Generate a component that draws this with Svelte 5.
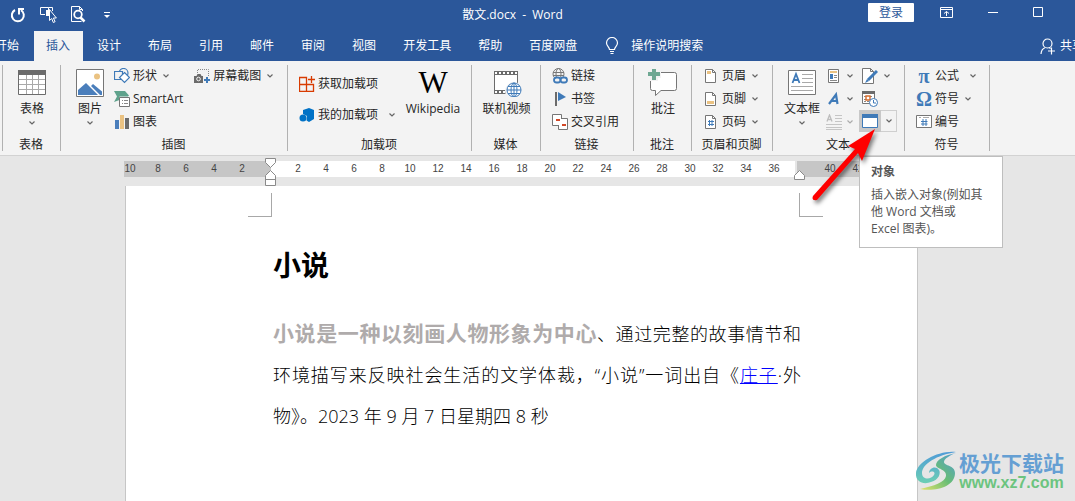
<script>
  const tabs = ['开始', '插入', '设计', '布局', '引用', '邮件', '审阅', '视图', '开发工具', '帮助', '百度网盘']
  let activeTab = $state('插入')

  const leftMarks = [10, 8, 6, 4, 2]
  const mainMarks = Array.from({ length: 18 }, (_, i) => (i + 1) * 2)
  const rightMarks = [40, 42, 44]
</script>

{#snippet chevron()}
  <svg class="chevron" width="6" height="4" viewBox="0 0 6 4"><path d="M.5 .5 3 3 5.500 .5" fill="none" stroke="#666" stroke-width="1.200" /></svg>
{/snippet}

{#snippet pageIcon(kind)}
  <svg width="16" height="16" viewBox="0 0 16 16">
    <path d="M2.500 1.500h7l3 3v10h-10z" fill="#fff" stroke="#767676" />
    <path d="M9.500 1.500v3h3" fill="none" stroke="#767676" />
    {#if kind === 'header'}
      <rect x="4" y="3" width="4" height="3" fill="#eac282" />
    {:else if kind === 'footer'}
      <rect x="4" y="10" width="7" height="3" fill="#eac282" />
    {:else}
      <path d="M6.500 6v6M9 6v6M5 7.500h6M5 10.500h6" stroke="#3f7ab8" />
    {/if}
  </svg>
{/snippet}

<div class="window">
  <header>
    <div class="titlebar">
      <div class="quick-access">
        <button aria-label="重复">
          <svg width="16" height="16" viewBox="0 0 16 16"><path d="M5 3A6 6 0 1 0 11 3.200" fill="none" stroke="#fff" stroke-width="2" /><path d="M9 7.500V2h5" fill="none" stroke="#fff" stroke-width="2" /></svg>
        </button>
        <button aria-label="选择对象">
          <svg width="17" height="17" viewBox="0 0 17 17"><path d="M5 8.500H.5v-7h8V4M8.500 1.500h4V5" fill="none" stroke="#fff" /><path d="M6 4h3v6H6z" fill="#fff" /><path d="M9.500 3.500v11l2.200-2 1.600 4 1.800-.8-1.700-3.700h3z" fill="#2b579a" stroke="#fff" /></svg>
        </button>
        <button aria-label="打印预览">
          <svg width="15" height="17" viewBox="0 0 15 17"><path d="M11.500 5V3.500l-3-3H.5v15h10M8.500 .5v3h3" fill="none" stroke="#fff" /><circle cx="7" cy="8.500" r="3.800" fill="none" stroke="#fff" stroke-width="1.800" /><path d="m9.500 11.500 4 4" stroke="#fff" stroke-width="2.500" /></svg>
        </button>
        <button aria-label="自定义快速访问工具栏">
          <svg width="6" height="8" viewBox="0 0 6 8"><path d="M0 1.500h6" stroke="#fff" /><path d="M0 4h6L3 7z" fill="#fff" /></svg>
        </button>
      </div>
      <div class="title">散文.docx &nbsp;-&nbsp; Word</div>
      <button class="sign-in">登录</button>
      <div class="window-controls">
        <button aria-label="功能区显示选项">
          <svg width="13" height="11" viewBox="0 0 13 11"><path d="M.5 .5h12v10H.5zM0 2.500h13M6.500 9V4.500M4 6.500l2.500-2 2.500 2" fill="none" stroke="#fff" /></svg>
        </button>
        <button aria-label="最小化">
          <svg width="10" height="11" viewBox="0 0 10 11"><path d="M0 5.500h10" stroke="#fff" /></svg>
        </button>
        <button aria-label="最大化">
          <svg width="10" height="11" viewBox="0 0 10 11"><path d="M.5 .5h9v9h-9z" fill="none" stroke="#fff" /></svg>
        </button>
      </div>
    </div>

    <nav class="tabs">
      {#each tabs as tab}
        <button class="tab" class:active={tab === activeTab} onclick={() => (activeTab = tab)}>{tab}</button>
      {/each}
      <button class="tell-me">
        <svg width="14" height="18" viewBox="0 0 14 18"><path d="M4.500 12.500c0-2.500-3-3.500-3-6.500a5.500 5.500 0 0 1 11 0c0 3-3 4-3 6.500zM5 14.500h4M5.500 16.500h3" fill="none" stroke="#fff" stroke-width="1.200" /></svg>
        <span>操作说明搜索</span>
      </button>
      <button class="share">
        <svg width="16" height="17" viewBox="0 0 16 17"><circle cx="7.500" cy="5.500" r="4.500" fill="none" stroke="#fff" stroke-width="1.200" /><path d="M1 16c.3-3.500 2-5.500 4-6.200M9 9.500l1.500 1M11.500 9.500v7M8 13h7" fill="none" stroke="#fff" stroke-width="1.200" /></svg>
        <span>共享</span>
      </button>
    </nav>
  </header>

  <div class="ribbon">
    <section class="group">
      <div class="tools">
        <button class="large">
          <svg width="28" height="28" viewBox="0 0 28 28"><path d="M.5 1.500h27v24H.5z" fill="#fff" stroke="#6b6b6b" /><path d="M0 1h28v5H0z" fill="#6b6b6b" /><path d="M1 10.500h26M1 15.500h26M1 20.500h26M8.500 6v19M14.500 6v19M20.500 6v19" stroke="#a9a9a9" /></svg>
          <span>表格</span>{@render chevron()}
        </button>
      </div>
      <h2>表格</h2>
    </section>

    <section class="group illustrations">
      <div class="tools">
        <button class="large">
          <svg width="28" height="28" viewBox="0 0 28 28"><path d="M.5 .5h27v27H.5z" fill="#fff" stroke="#767676" /><circle cx="21" cy="7.500" r="3" fill="#eac282" /><path d="M2 26v-5l8-7 12 12z" fill="#4a7ebb" /><path d="m15 17 2-2 9 7.500V26h-2z" fill="#4a7ebb" /></svg>
          <span>图片</span>{@render chevron()}
        </button>
        <div class="stack">
          <button class="small">
            <svg width="16" height="16" viewBox="0 0 16 16"><circle cx="9.500" cy="5" r="4.500" fill="none" stroke="#3f7ab8" stroke-width="1.200" /><path d="M.5 3.500h8v8h-8z" fill="#f3f3f3" stroke="#3f7ab8" stroke-width="1.200" /><path d="m10.500 4.500 5 5-5 5-5-5z" fill="#fff" stroke="#3f7ab8" stroke-width="1.200" /></svg>
            <span>形状</span>{@render chevron()}
          </button>
          <button class="small">
            <svg width="16" height="16" viewBox="0 0 16 16"><path d="M0 0h11l4 4.500-1 1H5.500V9L0 11l3-5.500z" fill="#5fa28c" /><path d="M5.500 6.500h10v9h-10z" fill="#fff" stroke="#767676" /><path d="M8 9.500h1M8 12.500h1M10 9.500h4M10 12.500h4" stroke="#888" /></svg>
            <span>SmartArt</span>
          </button>
          <button class="small">
            <svg width="16" height="16" viewBox="0 0 16 16"><path d="M1 6h4v9H1z" fill="#4a7ebb" /><path d="M6 1h4v14H6z" fill="#eac282" /><path d="M11 4h4v11h-4z" fill="#6b6b6b" /></svg>
            <span>图表</span>
          </button>
        </div>
        <div class="stack">
          <button class="small">
            <svg width="16" height="16" viewBox="0 0 16 16"><path d="M3.500 5V1.500h11V9" fill="none" stroke="#888" stroke-dasharray="1 1" /><path d="M0 8h2.500l1-2h3l1 2H9v7H0z" fill="#6b6b6b" /><circle cx="4.500" cy="11" r="1.800" fill="none" stroke="#f3f3f3" /><path d="M13 9v6M10 12h6" stroke="#3f7ab8" stroke-width="2" /></svg>
            <span>屏幕截图</span>{@render chevron()}
          </button>
        </div>
      </div>
      <h2>插图</h2>
    </section>

    <section class="group addins">
      <div class="tools">
        <div class="stack wide-rows">
          <button class="small">
            <svg width="16" height="16" viewBox="0 0 16 16"><path d="M7.500 15.500v-14h-7v14h14v-7H.5M12.500 0v7M9 3.500h7" fill="none" stroke="#d83b01" stroke-width="1.300" /></svg>
            <span>获取加载项</span>
          </button>
          <button class="small">
            <svg width="16" height="16" viewBox="0 0 16 16"><path d="m4 3 6-2 5 2v9l-5 3-2.500-1.500L8 9 4 7z" fill="#0072c6" /><circle cx="4" cy="11" r="3.500" fill="#0072c6" /></svg>
            <span>我的加载项</span>{@render chevron()}
          </button>
        </div>
        <button class="large">
          <span class="wiki" aria-hidden="true">W</span>
          <span>Wikipedia</span>
        </button>
      </div>
      <h2>加载项</h2>
    </section>

    <section class="group">
      <div class="tools">
        <button class="large">
          <svg width="30" height="28" viewBox="0 0 30 28"><path d="M2 2h24v23H2z" fill="#6b6b6b" /><path d="M3 6h22v15H3z" fill="#fff" /><path d="M3 4h22M3 23h22" stroke="#fff" stroke-width="2" stroke-dasharray="2 2" /><circle cx="22" cy="22" r="9" fill="#f3f3f3" /><g fill="none" stroke="#3f7ab8"><circle cx="22" cy="21" r="7" fill="#fff" /><ellipse cx="22" cy="21" rx="3" ry="7" /><path d="M15 21h14M16 17.500h12M16 24.500h12M22 14v14" /></g></svg>
          <span>联机视频</span>
        </button>
      </div>
      <h2>媒体</h2>
    </section>

    <section class="group links">
      <div class="tools">
        <div class="stack">
          <button class="small">
            <svg width="16" height="16" viewBox="0 0 16 16"><g fill="none" stroke="#777"><circle cx="6.500" cy="6" r="5.500" /><ellipse cx="6.500" cy="6" rx="2.500" ry="5.500" /><path d="M1 4.500h11M1 7.500h11" /></g><path d="M0 9h16v7H0z" fill="#f3f3f3" /><rect x="2" y="9.500" width="6.500" height="5" rx="2.500" fill="none" stroke="#3f7ab8" stroke-width="1.800" /><rect x="8.500" y="9.500" width="6.500" height="5" rx="2.500" fill="none" stroke="#3f7ab8" stroke-width="1.800" /></svg>
            <span>链接</span>
          </button>
          <button class="small">
            <svg width="16" height="16" viewBox="0 0 16 16"><path d="M4 1v14" stroke="#6b6b6b" stroke-width="2" /><path d="m6 1 8 5-8 4z" fill="#3f7ab8" /></svg>
            <span>书签</span>
          </button>
          <button class="small">
            <svg width="16" height="16" viewBox="0 0 16 16"><path d="M.5 .5h9v11h-9z" fill="#fff" stroke="#767676" /><path d="M6.500 4.500h9v11h-9z" fill="#fff" stroke="#767676" /><path d="M6 4h3v7H6z" fill="#fff" /><path d="M4 6h4M10 11h4" stroke="#d24726" stroke-width="2" /></svg>
            <span>交叉引用</span>
          </button>
        </div>
      </div>
      <h2>链接</h2>
    </section>

    <section class="group">
      <div class="tools">
        <button class="large">
          <svg width="30" height="28" viewBox="0 0 30 28"><path d="M4.500 3.500h22a2 2 0 0 1 2 2v14a2 2 0 0 1-2 2H13l-5.500 5v-5h-3a2 2 0 0 1-2-2v-14a2 2 0 0 1 2-2z" fill="#fff" stroke="#767676" /><path d="M-1-1h11v4h3v6h-3v3H2V9h-3z" fill="#f3f3f3" /><path d="M4-1h4v4h4v4H8v4H4V7H0V3h4z" fill="#6fa893" /></svg>
          <span>批注</span>
        </button>
      </div>
      <h2>批注</h2>
    </section>

    <section class="group header-footer">
      <div class="tools">
        <div class="stack">
          <button class="small">{@render pageIcon('header')}<span>页眉</span>{@render chevron()}</button>
          <button class="small">{@render pageIcon('footer')}<span>页脚</span>{@render chevron()}</button>
          <button class="small">{@render pageIcon('number')}<span>页码</span>{@render chevron()}</button>
        </div>
      </div>
      <h2>页眉和页脚</h2>
    </section>

    <section class="group text">
      <div class="tools">
        <button class="large">
          <svg width="28" height="28" viewBox="0 0 28 28"><path d="M.5 1.500h27v24H.5z" fill="#fff" stroke="#767676" /><path d="m4.500 14 3.500-9 3.500 9M5.500 11h5" fill="none" stroke="#3f7ab8" stroke-width="1.800" /><path d="M14 5.500h11M14 9.500h11M14 13.500h11M3 17.500h22M3 21.500h22" stroke="#a9a9a9" /></svg>
          <span>文本框</span>{@render chevron()}
        </button>
        <div class="stack">
          <button class="icon-only" aria-label="文档部件">
            <svg width="16" height="16" viewBox="0 0 16 16"><path d="M2.500 1.500h10v13h-10z" fill="#fff" stroke="#767676" /><path d="M4 4h7" stroke="#eac282" stroke-width="2" /><path d="M4 6h3v5H4z" fill="#3f7ab8" /><path d="M8 7.500h3M8 9.500h3M4 12.500h7" stroke="#888" /></svg>
            {@render chevron()}
          </button>
          <button class="icon-only" aria-label="艺术字">
            <svg width="16" height="16" viewBox="0 0 16 16"><path d="m3 13 7-9.500 1.500 9.500M5.500 10h5.500" fill="none" stroke="#3f7ab8" stroke-width="2.200" /></svg>
            {@render chevron()}
          </button>
          <button class="icon-only disabled" aria-label="首字下沉" disabled>
            <svg width="16" height="16" viewBox="0 0 16 16"><path d="m1 7.500 2.500-6.500 2.500 6.500M2 5.500h3" fill="none" stroke="#888" stroke-width="1.300" /><path d="M9 1.500h7M9 4.500h7M9 7.500h7M0 10.500h16M0 13.500h16M0 15.500h16" stroke="#999" /></svg>
            {@render chevron()}
          </button>
        </div>
        <div class="stack objects">
          <button class="icon-only" aria-label="签名行">
            <svg width="16" height="16" viewBox="0 0 16 16"><path d="M.5 .5h8l3 3v12H.5zM8.500 .5v3h3" fill="#fff" stroke="#767676" /><path d="m6 12 9-9" stroke="#3f7ab8" stroke-width="3" /><path d="m3 15 2-4 2 2z" fill="#3f7ab8" /></svg>
            {@render chevron()}
          </button>
          <button class="icon-only" aria-label="日期和时间">
            <svg width="16" height="16" viewBox="0 0 16 16"><path d="M.5 .5h12v12H.5z" fill="#fff" stroke="#767676" /><path d="M0 0h13v3H0z" fill="#6b6b6b" /><path d="M2 5.500h9M2 8.500h9M2 10.500h9" stroke="#888" stroke-dasharray="2 1" /><path d="M4 5h4v4H4z" fill="#fff" stroke="#d86b2a" stroke-width="1.400" /><circle cx="11.500" cy="11.500" r="4" fill="#fff" stroke="#3f7ab8" /><path d="M11.500 9v3h2.500" fill="none" stroke="#3f7ab8" /></svg>
          </button>
          <div class="object-split">
            <button class="object-main" aria-label="对象" aria-describedby="object-tip">
              <svg width="16" height="14" viewBox="0 0 16 14"><path d="M.5 .5h15v13H.5z" fill="#fff" stroke="#3f7ab8" /><path d="M0 0h16v4H0z" fill="#3f7ab8" /></svg>
            </button>
            <button class="object-more" aria-label="更多对象选项">{@render chevron()}</button>
            <div class="tooltip" id="object-tip" role="tooltip">
              <strong>对象</strong>
              <p>插入嵌入对象(例如其他 Word 文档或 Excel 图表)。</p>
            </div>
            <svg class="pointer" width="80" height="84" viewBox="0 0 80 84">
              <path d="M70 3 43 20l7 3L8 70q-2 5 4 4L53 27l4 8z" fill="#fe0000" />
            </svg>
          </div>
        </div>
      </div>
      <h2>文本</h2>
    </section>

    <section class="group symbols">
      <div class="tools">
        <div class="stack">
          <button class="small formula"><span class="glyph" aria-hidden="true">π</span><span>公式</span>{@render chevron()}</button>
          <button class="small"><span class="glyph" aria-hidden="true">Ω</span><span>符号</span>{@render chevron()}</button>
          <button class="small">
            <svg width="16" height="16" viewBox="0 0 16 16"><path d="M.5 1.500h15v12H.5z" fill="#fff" stroke="#767676" /><path d="M3 3.500h2M7 3.500h6" stroke="#aaa" /><path d="M7 5v7M10 5v7M5 7.500h6.500M5 10h6.500" stroke="#3f7ab8" /></svg>
            <span>编号</span>
          </button>
        </div>
      </div>
      <h2>符号</h2>
    </section>
  </div>

  <main>
    <div class="ruler">
      <div class="ruler-part before">{#each leftMarks as n}<span>{n}</span>{/each}</div>
      <div class="ruler-part inside">{#each mainMarks as n}<span>{n}</span>{/each}</div>
      <div class="ruler-part after">{#each rightMarks as n}<span>{n}</span>{/each}</div>
      <svg class="indent first" width="12" height="29" viewBox="0 0 12 29"><path d="M.5 .5h10v4l-5 5-5-5zM5.500 12.500l5 5v10H.5v-10zM.5 21.500h10" fill="#fff" stroke="#8a8a8a" /></svg>
      <svg class="indent last" width="12" height="12" viewBox="0 0 12 12"><path d="m5.500 .5 5 5v4H.5v-4z" fill="#fff" stroke="#8a8a8a" /></svg>
    </div>

    <article class="page">
      <div class="margins"><i class="corner left"></i><i class="corner right"></i></div>
      <h1>小说</h1>
      <p class="body-text" lang="zh-CN"><b>小说是一种以刻画人物形象为中心</b>、通过完整的故事情节和环境描写来反映社会生活的文学体裁&#xFF0C;“小说”一词出自《<a href="#zhuangzi">庄子</a>·外物》。2023 年 9 月 7 日星期四 8 秒</p>
    </article>
  </main>

  <div class="watermark">
    <svg width="44" height="42" viewBox="0 0 44 42">
      <defs>
        <linearGradient id="wave" x1="0" y1="0" x2="0" y2="1"><stop offset="0" stop-color="#4f9bd8" /><stop offset="1" stop-color="#6ccfb4" /></linearGradient>
        <linearGradient id="leaf" x1="1" y1="0" x2="0" y2="1"><stop offset="0" stop-color="#4f9bd8" /><stop offset=".5" stop-color="#68bd75" /><stop offset="1" stop-color="#e5e36a" /></linearGradient>
      </defs>
      <path d="M41 2C24 0 2 12 1 23c-1 9 8 12 15 9 8-2 10-9 8-12-3-5-10-2-10 3 3-3 7-1 5 2-3 5-12 5-12-2C7 14 22 5 41 2z" fill="url(#wave)" />
      <path d="M41 3C30 5 21 10 21 15c0 4 11 4 10 11-1 6-12 10-26 13 15 3 35-2 35-16 0-8-11-7-11-11 0-3 6-7 12-9z" fill="url(#leaf)" />
    </svg>
    <div>
      <div class="site-name">极光下载站</div>
      <div class="site-url">www.xz7.com</div>
    </div>
  </div>
</div>

<style>
  :global(body) {
    background: #e6e6e6;
  }

  .window {
    position: relative;
    display: flex;
    flex-direction: column;
    min-height: 100vh;
    overflow: hidden;
    font: 12px/16px 'Open Sans', 'Noto Sans CJK SC', sans-serif;
    color: #262626;
  }

  button {
    display: flex;
    align-items: center;
    padding: 0;
    border: 0;
    background: none;
    font: inherit;
    color: inherit;
    white-space: nowrap;
  }

  svg {
    display: block;
    flex: none;
  }

  h1, h2, p {
    margin: 0;
  }

  /* Title bar and tabs */
  header {
    background: #2b579a;
    color: #fff;
  }

  .titlebar {
    display: flex;
    align-items: center;
    height: 29px;
    padding-bottom: 2px;
  }

  .quick-access {
    display: flex;
    align-items: center;
    gap: 14px;
    width: 147px;
    height: 28px;
    padding-left: 10px;
  }

  .quick-access button:last-child {
    margin-left: 4px;
  }

  .title {
    flex: 1;
    text-align: center;
  }

  .sign-in {
    justify-content: center;
    width: 46px;
    height: 19px;
    margin-bottom: 4px;
    border-radius: 1px;
    background: #fff;
    color: #2b579a;
  }

  .window-controls {
    display: flex;
    gap: 35px;
    padding: 0 32px 4px 26px;
  }

  .tabs {
    display: flex;
    height: 30px;
    margin-left: -17px;
  }

  .tab {
    padding: 0 13px 0 12px;
    margin-right: 2px;
  }

  .tab.active {
    background: #f3f3f3;
    color: #2b579a;
  }

  .tell-me {
    gap: 12px;
    margin-left: 13px;
  }

  .share {
    gap: 4px;
    margin: 0 -9px 0 auto;
  }

  /* Ribbon */
  .ribbon {
    display: grid;
    grid-template-columns: 58px 227px 184px 69px 93px 58px 81px 132px 85px;
    padding-left: 2px;
    border-bottom: 1px solid #d2d2d2;
    background: #f3f3f3;
  }

  .group {
    position: relative;
    display: flex;
    flex-direction: column;
  }

  .group::before,
  .group:last-child::after {
    content: '';
    position: absolute;
    top: 4px;
    bottom: 4px;
    left: 0;
    width: 1px;
    background: #b1b1b1;
  }

  .group:last-child::after {
    left: 100%;
  }

  .tools {
    display: flex;
    height: 69px;
    padding-top: 3px;
  }

  h2 {
    padding-top: 2px;
    font: inherit;
    line-height: 20px;
    text-align: center;
  }

  .large {
    flex-direction: column;
    flex: 1;
    padding: 5px 0 0 2px;
  }

  .large span {
    margin-top: 4px;
  }

  .large .chevron {
    margin-top: 4px;
  }

  .large .wiki {
    height: 28px;
    margin: 0;
    font: 31px/28px 'Liberation Serif', serif;
    color: #000;
  }

  .small {
    gap: 3px;
    height: 23px;
  }

  .chevron {
    margin-left: 3px;
  }

  .large .chevron,
  .object-more .chevron {
    margin-left: 0;
  }

  .illustrations .stack:last-child {
    margin: 0 14px 0 11px;
  }

  .illustrations .large,
  .text .large {
    flex: none;
    width: 54px;
    padding-left: 6px;
  }

  .wide-rows {
    padding: 4px 0 0 12px;
  }

  .wide-rows .small {
    height: 31px;
  }

  .wide-rows .chevron {
    margin-left: 8px;
  }

  .addins .large {
    padding-left: 0;
  }

  .links .tools {
    padding-left: 12px;
  }

  .header-footer .tools {
    padding-left: 12px;
  }

  .icon-only {
    height: 23px;
    gap: 2px;
    width: 33px;
  }

  .disabled {
    opacity: 0.5;
  }

  .objects .icon-only {
    padding-left: 3px;
    gap: 3px;
  }

  .object-split {
    position: relative;
    display: flex;
    width: 38px;
    height: 22px;
  }

  .object-main {
    justify-content: center;
    width: 22px;
    background: #c8c8c8;
  }

  .object-more {
    flex: 1;
    justify-content: center;
    border: 1px solid #cfcfcf;
    border-left: 0;
  }

  .symbols .tools {
    padding-left: 12px;
  }

  .formula .chevron {
    margin-left: 8px;
  }

  .glyph {
    width: 16px;
    text-align: center;
    font: bold 20px/20px 'Liberation Serif', serif;
    color: #3f7ab8;
  }

  .tooltip {
    position: absolute;
    z-index: 2;
    top: 46px;
    left: 0;
    box-sizing: border-box;
    width: 144px;
    padding: 6px 18px 10px 11px;
    border: 1px solid #bebebe;
    background: #fff;
    color: #555;
    line-height: 17px;
  }

  .tooltip p {
    margin-top: 6px;
  }

  .pointer {
    position: absolute;
    z-index: 3;
    top: 16px;
    left: -54px;
    filter: drop-shadow(2px 3px 2px rgba(0, 0, 0, 0.5));
    pointer-events: none;
  }

  /* Document area */
  main {
    display: flex;
    flex-direction: column;
    flex: 1;
    padding-left: 124px;
    background: #e6e6e6;
  }

  .ruler {
    position: relative;
    display: flex;
    max-width: 792px;
    margin: 5px 0 9px;
    font: 10px/16px 'Liberation Sans', sans-serif;
    color: #444;
  }

  .ruler-part {
    display: flex;
    height: 16px;
  }

  .ruler-part span {
    flex: none;
    width: 28px;
    text-align: center;
  }

  .before {
    justify-content: flex-end;
    width: 132px;
    padding-right: 15px;
    background: #c6c6c6;
  }

  .inside {
    width: 511px;
    padding-left: 13px;
    background: #fff;
  }

  .after {
    flex: 1;
    margin-left: 2px;
    padding-left: 19px;
    background: #c6c6c6;
  }

  .indent {
    position: absolute;
    top: -3px;
    left: 141px;
  }

  .indent.last {
    top: 9px;
    left: 670px;
  }

  .page {
    flex: 1;
    max-width: 791px;
    margin-left: 1px;
    border: solid #c6c6c6;
    border-width: 0 1px;
    background: #fff;
    color: #000;
  }

  .margins {
    display: flex;
    justify-content: space-between;
    padding: 7px 94px 0 122px;
  }

  .corner {
    width: 23px;
    height: 23px;
    border: solid #a8a8a8;
    border-width: 0 1px 1px 0;
  }

  .corner.right {
    border-width: 0 0 1px 1px;
  }

  h1 {
    margin: 27px 0 0 147px;
    font: bold 28px/40px 'Noto Sans CJK SC', sans-serif;
  }

  .body-text {
    padding: 29px 116px 0 147px;
    font: 300 18px/41px 'Open Sans', 'Noto Sans CJK SC', sans-serif;
    text-align: justify;
  }

  .body-text b {
    font-size: 21px;
    font-weight: 700;
    color: #afabab;
  }

  .body-text a {
    color: #00f;
  }

  /* Site mark */
  .watermark {
    position: absolute;
    right: 11px;
    bottom: 9px;
    display: flex;
    align-items: center;
  }

  .site-name {
    font: bold 21px/24px 'Noto Sans CJK SC', sans-serif;
    color: #659fd3;
  }

  .site-url {
    font: bold 16px/18px 'Liberation Sans', sans-serif;
    text-align: center;
    color: #6cc47f;
  }
</style>
